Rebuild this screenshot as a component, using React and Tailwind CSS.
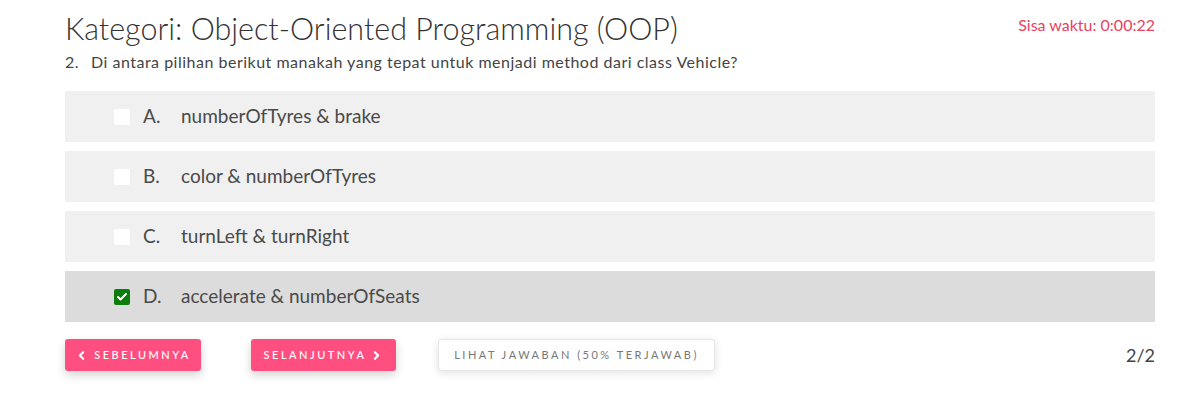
import { Check, ChevronLeft, ChevronRight } from 'lucide-react';

const options = [
  { key: 'A', text: 'numberOfTyres & brake', checked: false },
  { key: 'B', text: 'color & numberOfTyres', checked: false },
  { key: 'C', text: 'turnLeft & turnRight', checked: false },
  { key: 'D', text: 'accelerate & numberOfSeats', checked: true },
];

const OptionRow = ({ option }) => (
  <div
    className={`flex items-center h-[51px] pl-[49px] ${
      option.checked ? 'bg-[#dcdcdc]' : 'bg-[#f0f0f0]'
    }`}
  >
    {option.checked ? (
      <span className="w-[16px] h-[16px] rounded-[2px] bg-[#0a7d0a] flex items-center justify-center">
        <Check size={12} strokeWidth={4} className="text-white" />
      </span>
    ) : (
      <span className="w-[16px] h-[16px] rounded-[2px] bg-white" />
    )}
    <span className="ml-[13px] w-[38px] text-[19px] text-[#4a4a4a]">{option.key}.</span>
    <span className="text-[19px] text-[#4a4a4a]">{option.text}</span>
  </div>
);

export default function App() {
  return (
    <div className="w-[1201px] h-[416px] bg-white font-['Lato',sans-serif]">
      <div className="ml-[65px] w-[1090px] pt-[10px]">
        <div className="flex justify-between items-start">
          <h1 className="text-[30.5px] leading-[36px] font-light text-[#333]">
            Kategori: Object-Oriented Programming (OOP)
          </h1>
          <span className="text-[16px] mt-[3px] text-[#e8435f]">Sisa waktu: 0:00:22</span>
        </div>
        <p className="flex text-[16px] leading-[20px] tracking-[0.5px] text-[#444] mt-[6px]">
          <span className="w-[26px]">2.</span>
          <span>Di antara pilihan berikut manakah yang tepat untuk menjadi method dari class Vehicle?</span>
        </p>
        <div className="flex flex-col gap-[9px] mt-[19px]">
          {options.map((o) => (
            <OptionRow key={o.key} option={o} />
          ))}
        </div>
        <div className="flex items-start mt-[17px]">
          <button className="h-[32px] w-[136px] rounded-[3px] bg-[#ff4f81] text-white text-[11px] tracking-[2.5px] font-medium shadow-[0_4px_10px_rgba(0,0,0,0.18)] flex items-center justify-center gap-[6px]">
            <ChevronLeft size={13} strokeWidth={4} />
            SEBELUMNYA
          </button>
          <button className="ml-[50px] h-[32px] w-[145px] rounded-[3px] bg-[#ff4f81] text-white text-[11px] tracking-[2.5px] font-medium shadow-[0_4px_10px_rgba(0,0,0,0.18)] flex items-center justify-center gap-[4px]">
            SELANJUTNYA
            <ChevronRight size={13} strokeWidth={4} />
          </button>
          <button className="ml-[42px] h-[32px] w-[277px] rounded-[3px] bg-white border border-[#e6e6e6] text-[#777] text-[11px] tracking-[2.5px] shadow-[0_2px_8px_rgba(0,0,0,0.12)]">
            LIHAT JAWABAN (50% TERJAWAB)
          </button>
          <span className="ml-auto mt-[3px] text-[18px] text-[#444]">2/2</span>
        </div>
      </div>
    </div>
  );
}
